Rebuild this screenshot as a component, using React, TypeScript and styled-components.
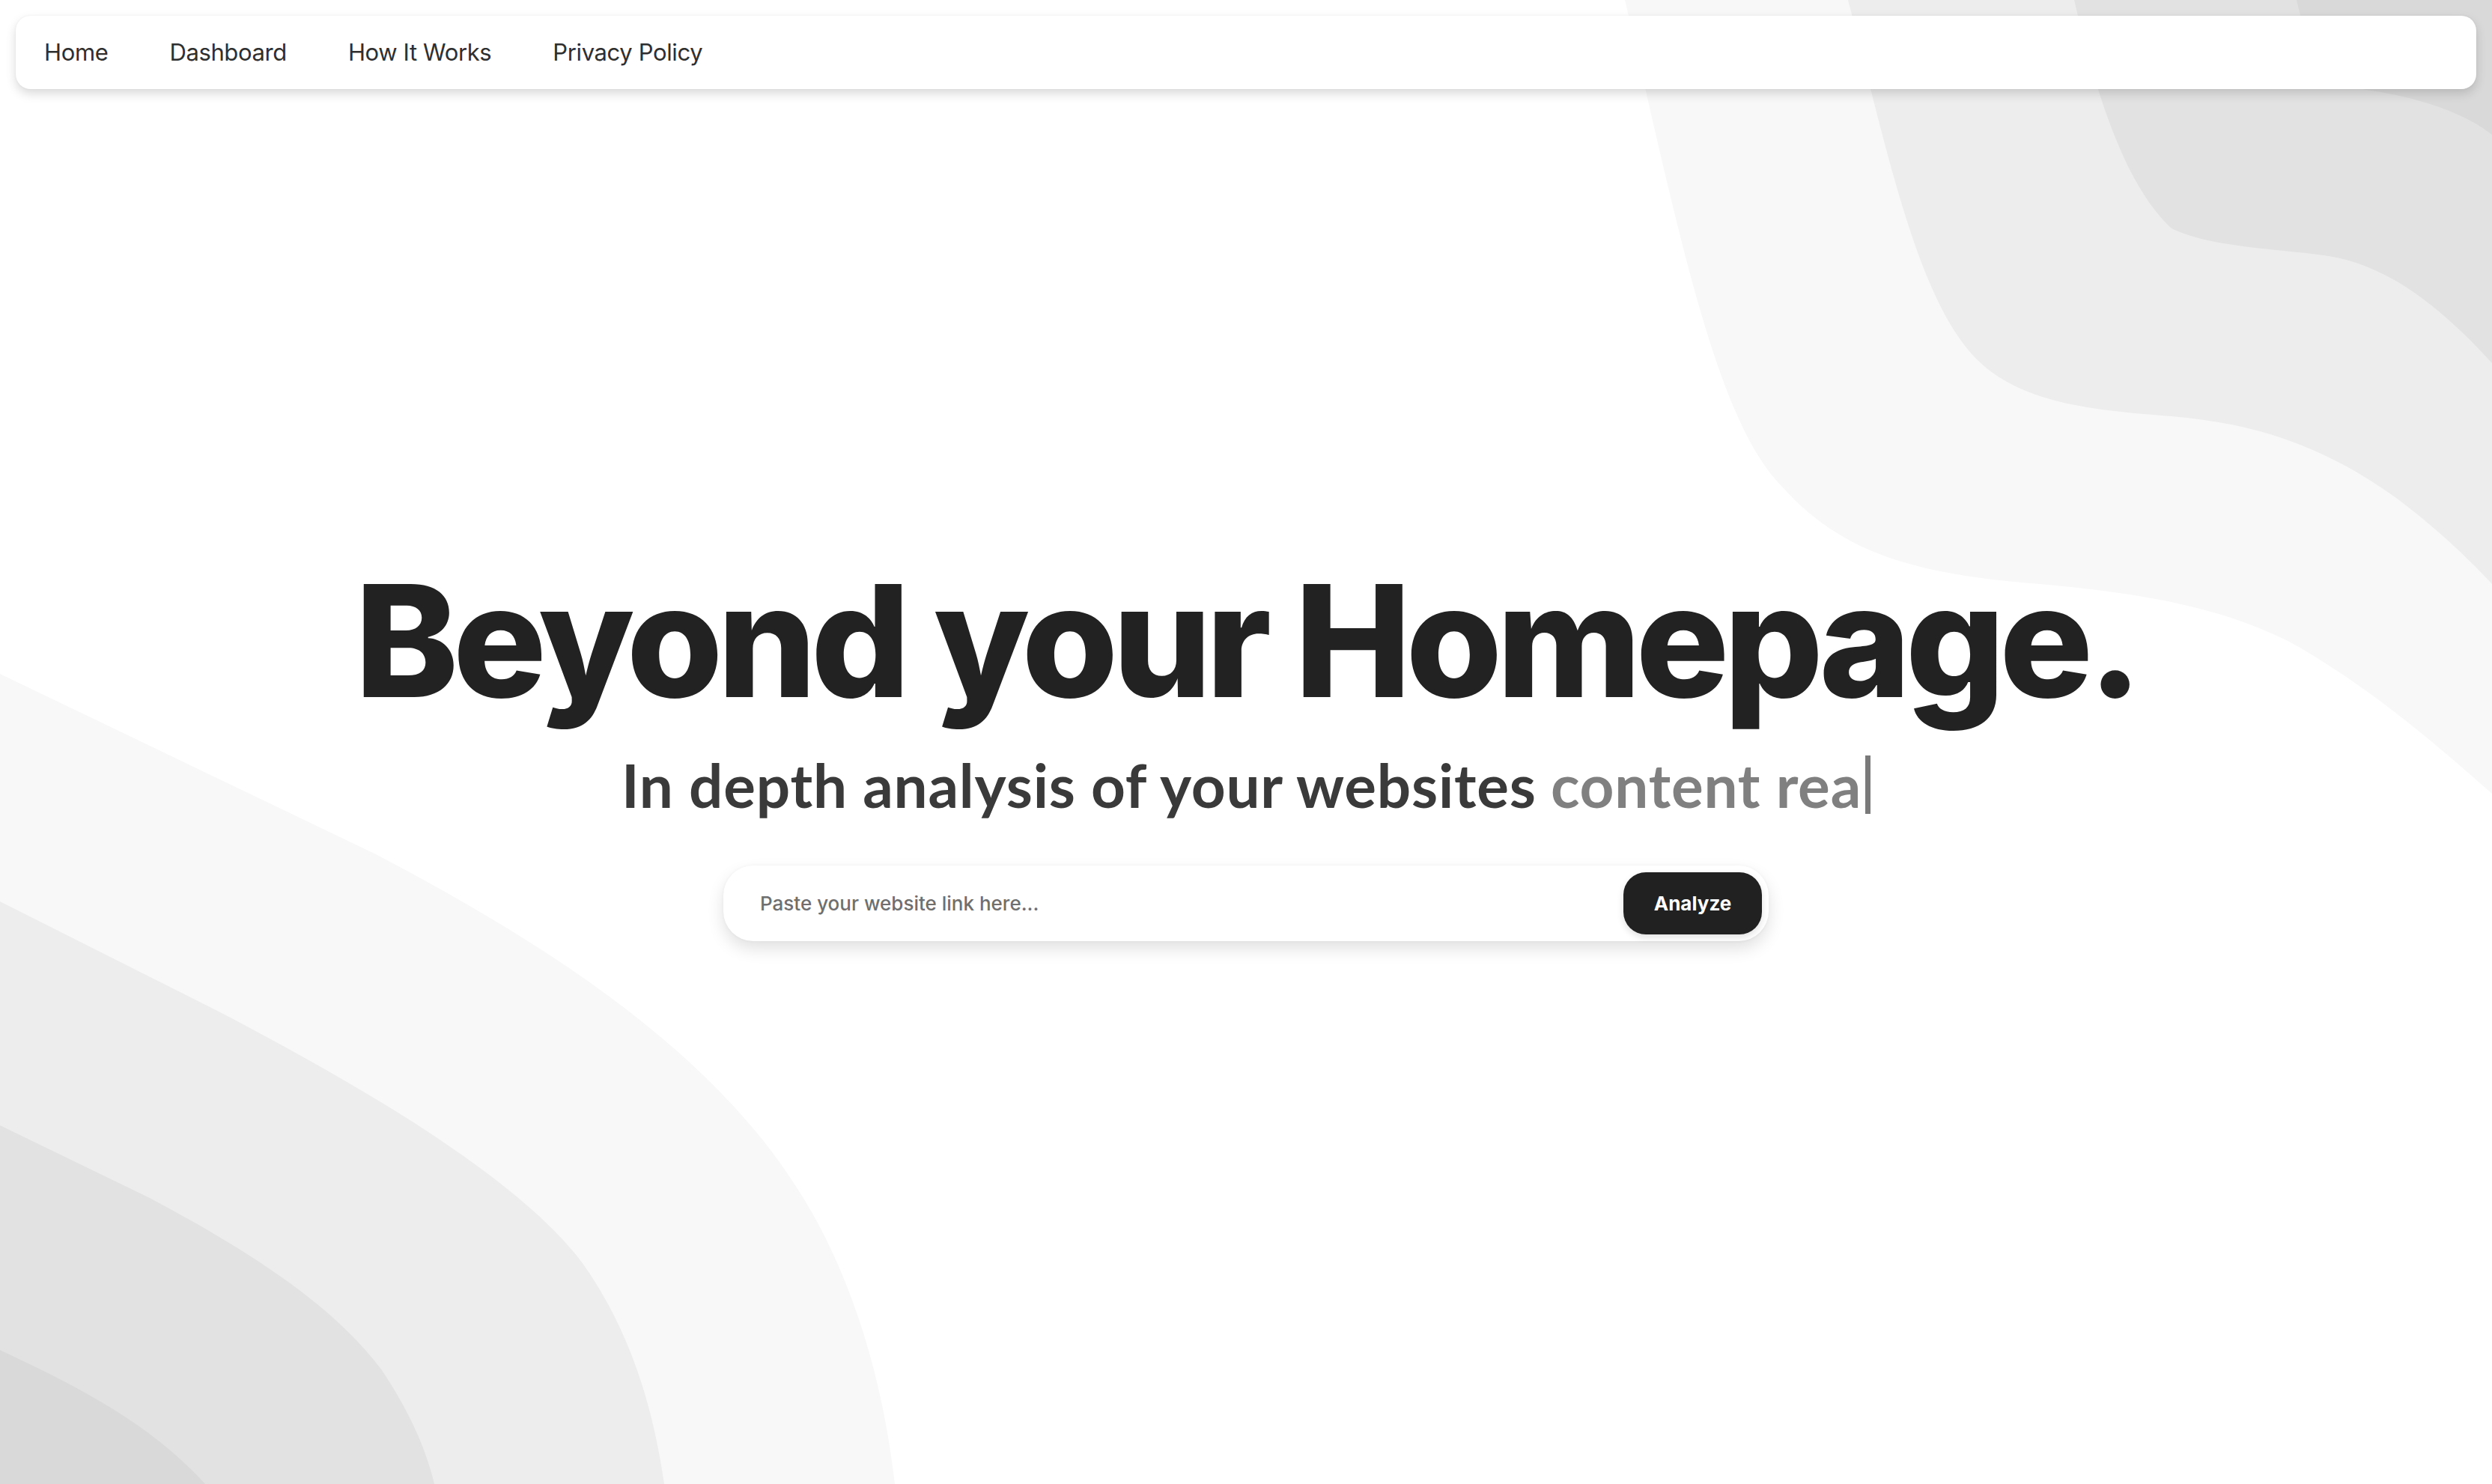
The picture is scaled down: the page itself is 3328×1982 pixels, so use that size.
import React from "react";
import styled, { createGlobalStyle } from "styled-components";

const GlobalStyle = createGlobalStyle`
  html, body {
    margin: 0;
    padding: 0;
    background: #ffffff;
  }
  * { box-sizing: border-box; }
`;

const Page = styled.div`
  position: relative;
  min-height: 100vh;
  overflow: hidden;
  background: #ffffff;
  font-family: "Inter", "Liberation Sans", sans-serif;
`;

const Backdrop = styled.svg`
  position: absolute;
  inset: 0;
  width: 100%;
  height: 100%;
  z-index: 0;
  pointer-events: none;
`;

const Header = styled.header`
  position: relative;
  z-index: 1;
  padding: 21px;
`;

const NavBar = styled.nav`
  display: flex;
  align-items: center;
  gap: 82px;
  height: 98px;
  padding: 0 38px 2px;
  background: #ffffff;
  border-radius: 20px;
  box-shadow: 0 6px 14px rgba(0, 0, 0, 0.15), 0 0 3px rgba(0, 0, 0, 0.05);
`;

const NavLink = styled.a`
  font-family: "Inter", "Liberation Sans", sans-serif;
  font-size: 31px;
  font-weight: 400;
  letter-spacing: -0.012em;
  color: #2f2f2f;
  text-decoration: none;
  line-height: 1;
`;

const Hero = styled.main`
  position: relative;
  z-index: 1;
  display: flex;
  flex-direction: column;
  align-items: center;
  padding-top: 611px;
`;

const Title = styled.h1`
  margin: 0;
  font-family: "Inter", "Liberation Sans", sans-serif;
  font-size: 208px;
  line-height: 208px;
  font-weight: 800;
  letter-spacing: -0.035em;
  color: #222222;
  white-space: nowrap;
`;

const Subtitle = styled.p`
  margin: 41px 0 0;
  font-family: "Lato", "Liberation Sans", sans-serif;
  font-size: 80px;
  line-height: 1.2;
  font-weight: 700;
  letter-spacing: 0.01em;
  color: #3a3a3a;
  white-space: nowrap;
  display: flex;
  align-items: center;
`;

const Typed = styled.span`
  color: #808080;
  margin-left: 0.24em;
`;

const Caret = styled.span`
  display: inline-block;
  width: 7px;
  height: 78px;
  margin-left: 5px;
  background: #7a7a7a;
`;

const SearchForm = styled.form`
  margin-top: 60px;
  display: flex;
  align-items: center;
  width: 1396px;
  height: 101px;
  padding: 9px;
  background: #ffffff;
  border-radius: 40px;
  box-shadow: 0 10px 22px rgba(0, 0, 0, 0.12), 0 0 4px rgba(0, 0, 0, 0.04);
`;

const UrlInput = styled.input`
  flex: 1;
  height: 100%;
  border: none;
  outline: none;
  background: transparent;
  padding: 0 0 0 40px;
  font-family: "Inter", "Liberation Sans", sans-serif;
  font-size: 26px;
  font-weight: 500;
  color: #222222;

  &::placeholder {
    color: #6f6f6f;
  }
`;

const AnalyzeButton = styled.button`
  width: 185px;
  height: 83px;
  border: none;
  border-radius: 30px;
  background: #212121;
  color: #ffffff;
  font-family: "Inter", "Liberation Sans", sans-serif;
  font-size: 26px;
  font-weight: 700;
  cursor: pointer;
  box-shadow: 0 4px 10px rgba(0, 0, 0, 0.12);
`;

const navItems = ["Home", "Dashboard", "How It Works", "Privacy Policy"];

export default function App() {
  return (
    <>
      <GlobalStyle />
      <Page>
        <Backdrop viewBox="0 0 3328 1982" preserveAspectRatio="none">
          <path
            fill="#f8f8f8"
            d="M2170,0 C2240,300 2290,560 2380,650 C2460,740 2560,765 2700,778 C2850,790 2980,810 3080,870 C3180,930 3260,1000 3328,1060 L3328,0 Z"
          />
          <path
            fill="#ededed"
            d="M2468,0 C2520,200 2560,400 2640,480 C2700,540 2800,548 2900,556 C3020,566 3110,600 3200,665 C3260,710 3300,750 3328,780 L3328,0 Z"
          />
          <path
            fill="#e2e2e2"
            d="M2770,0 C2800,130 2840,250 2900,305 C2950,330 3040,332 3110,342 C3190,355 3260,410 3328,485 L3328,0 Z"
          />
          <path
            fill="#d9d9d9"
            d="M3067,0 C3080,60 3110,110 3160,120 C3230,130 3290,150 3328,180 L3328,0 Z"
          />
          <path
            fill="#f8f8f8"
            d="M0,900 L500,1140 C750,1270 950,1410 1060,1580 C1140,1700 1180,1850 1195,1982 L0,1982 Z"
          />
          <path
            fill="#ededed"
            d="M0,1204 L300,1355 C500,1460 700,1580 780,1690 C850,1790 875,1900 887,1982 L0,1982 Z"
          />
          <path
            fill="#e2e2e2"
            d="M0,1503 L200,1600 C350,1680 450,1750 510,1830 C550,1890 570,1940 580,1982 L0,1982 Z"
          />
          <path
            fill="#d9d9d9"
            d="M0,1803 C100,1850 200,1900 274,1982 L0,1982 Z"
          />
        </Backdrop>

        <Header>
          <NavBar>
            {navItems.map((item) => (
              <NavLink key={item} href="#">
                {item}
              </NavLink>
            ))}
          </NavBar>
        </Header>

        <Hero>
          <Title>Beyond your Homepage.</Title>
          <Subtitle>
            In depth analysis of your websites
            <Typed>content rea</Typed>
            <Caret />
          </Subtitle>
          <SearchForm onSubmit={(e) => e.preventDefault()}>
            <UrlInput type="text" placeholder="Paste your website link here..." />
            <AnalyzeButton type="submit">Analyze</AnalyzeButton>
          </SearchForm>
        </Hero>
      </Page>
    </>
  );
}
